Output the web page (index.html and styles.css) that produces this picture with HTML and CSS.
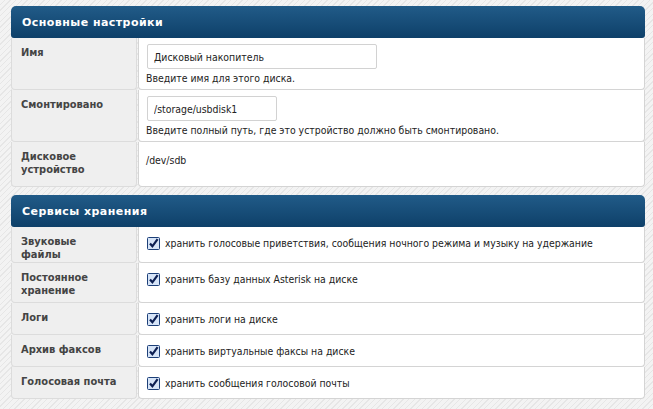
FILE: index.html
```html
<!DOCTYPE html>
<html>
<head>
<meta charset="utf-8">
<link rel="stylesheet" href="styles.css">
</head>
<body>
<div class="page">
  <section class="section">
    <div class="head">Основные настройки</div>
    <div class="row r-name">
      <div class="label">Имя</div>
      <div class="value">
        <input class="field wide" type="text" value="Дисковый накопитель">
        <div class="hint">Введите имя для этого диска.</div>
      </div>
    </div>
    <div class="row r-mount">
      <div class="label">Смонтировано</div>
      <div class="value">
        <input class="field narrow" type="text" value="/storage/usbdisk1">
        <div class="hint">Введите полный путь, где это устройство должно быть смонтировано.</div>
      </div>
    </div>
    <div class="row r-dev">
      <div class="label">Дисковое<br>устройство</div>
      <div class="value plain">/dev/sdb</div>
    </div>
  </section>
  <section class="section">
    <div class="head">Сервисы хранения</div>
    <div class="row r-c2">
      <div class="label">Звуковые<br>файлы</div>
      <div class="value check"><span class="cb"><svg viewBox="0 0 13 13" width="13" height="13"><rect x="0.5" y="0.5" width="12" height="12" rx="1" fill="#d6e4f7" stroke="#1c3f78"/><path d="M3 6.5 L5.4 9.3 L10.6 2.2" fill="none" stroke="#0d1f52" stroke-width="2.2"/></svg></span>хранить голосовые приветствия, сообщения ночного режима и музыку на удержание</div>
    </div>
    <div class="row r-c2b">
      <div class="label">Постоянное<br>хранение</div>
      <div class="value check"><span class="cb"><svg viewBox="0 0 13 13" width="13" height="13"><rect x="0.5" y="0.5" width="12" height="12" rx="1" fill="#d6e4f7" stroke="#1c3f78"/><path d="M3 6.5 L5.4 9.3 L10.6 2.2" fill="none" stroke="#0d1f52" stroke-width="2.2"/></svg></span>хранить базу данных Asterisk на диске</div>
    </div>
    <div class="row r-c1">
      <div class="label">Логи</div>
      <div class="value check"><span class="cb"><svg viewBox="0 0 13 13" width="13" height="13"><rect x="0.5" y="0.5" width="12" height="12" rx="1" fill="#d6e4f7" stroke="#1c3f78"/><path d="M3 6.5 L5.4 9.3 L10.6 2.2" fill="none" stroke="#0d1f52" stroke-width="2.2"/></svg></span>хранить логи на диске</div>
    </div>
    <div class="row r-c1">
      <div class="label">Архив факсов</div>
      <div class="value check"><span class="cb"><svg viewBox="0 0 13 13" width="13" height="13"><rect x="0.5" y="0.5" width="12" height="12" rx="1" fill="#d6e4f7" stroke="#1c3f78"/><path d="M3 6.5 L5.4 9.3 L10.6 2.2" fill="none" stroke="#0d1f52" stroke-width="2.2"/></svg></span>хранить виртуальные факсы на диске</div>
    </div>
    <div class="row r-c1">
      <div class="label">Голосовая почта</div>
      <div class="value check"><span class="cb"><svg viewBox="0 0 13 13" width="13" height="13"><rect x="0.5" y="0.5" width="12" height="12" rx="1" fill="#d6e4f7" stroke="#1c3f78"/><path d="M3 6.5 L5.4 9.3 L10.6 2.2" fill="none" stroke="#0d1f52" stroke-width="2.2"/></svg></span>хранить сообщения голосовой почты</div>
    </div>
  </section>
</div>
</body>
</html>
```

FILE: styles.css
```css
html, body {
  margin: 0;
  padding: 0;
}
body {
  width: 653px;
  height: 409px;
  overflow: hidden;
  font-family: "DejaVu Sans Condensed", "DejaVu Sans", sans-serif;
  font-size: 10.4px;
  color: #222;
  background-color: #f1f1f1;
  background-image: repeating-linear-gradient(135deg, #f3f3f3 0px, #f3f3f3 3px, #e6e6e6 3px, #e6e6e6 4px);
}
.page {
  padding: 6px 8px 0 11px;
  display: flex;
  flex-direction: column;
  gap: 8px;
}
.section {
  display: flex;
  flex-direction: column;
}
.head {
  height: 32px;
  box-sizing: border-box;
  padding: 10px 0 0 11px;
  background: linear-gradient(#215b88, #0e4069);
  border-radius: 5px 5px 3px 3px;
  color: #fff;
  font-family: "DejaVu Sans", sans-serif;
  font-weight: bold;
  font-size: 11px;
  letter-spacing: 0.45px;
}
.row {
  display: grid;
  grid-template-columns: 126px 1fr;
  column-gap: 1px;
}
.label {
  background: #efefef;
  border: 1px solid #dcdcdc;
  border-top: none;
  border-radius: 0 0 4px 4px;
  padding: 8px 0 0 9px;
  font-weight: bold;
  font-size: 11px;
  color: #444;
  line-height: 13px;
}
.value {
  background: #fff;
  border: 1px solid #d4d4d4;
  border-top: none;
  border-radius: 0 0 4px 4px;
  padding: 6px 0 0 7px;
}
.r-name { height: 52px; }
.r-mount { height: 52px; }
.r-dev { height: 45px; }
.r-c2 { height: 36px; }
.r-c2b { height: 40px; }
.r-c1 { height: 32px; }
.field {
  display: block;
  box-sizing: border-box;
  height: 25px;
  border: 1px solid #d2d2d2;
  border-radius: 2px;
  padding: 0 6px;
  font-family: "DejaVu Sans Condensed", "DejaVu Sans", sans-serif;
  font-size: 10.4px;
  color: #222;
  background: #fff;
  margin-left: 1px;
}
.wide { width: 230px; }
.narrow { width: 130px; }
.hint {
  margin-top: 3px;
  line-height: 13px;
}
.plain {
  padding-top: 12px;
}
.check {
  display: flex;
  align-items: flex-start;
  padding-top: 9px;
  gap: 5px;
  line-height: 15px;
}
.cb {
  width: 13px;
  height: 13px;
  flex: none;
  margin-left: 1px;
  margin-top: 1px;
}
.cb svg { display: block; }
```
